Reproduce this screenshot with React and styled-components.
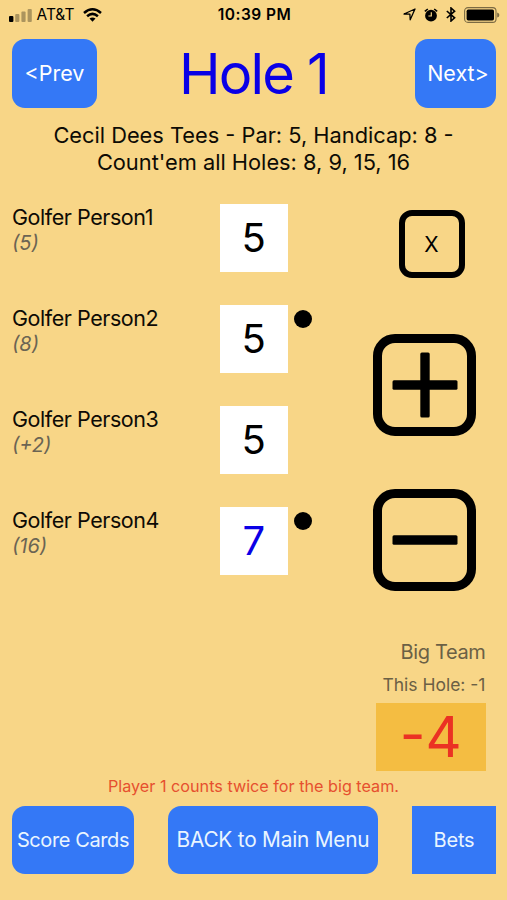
import React from 'react'
import styled, { createGlobalStyle } from 'styled-components';

const golfers = [
  { name: 'Golfer Person1', handicap: '(5)', score: 5 },
  { name: 'Golfer Person2', handicap: '(8)', score: 5, dot: true },
  { name: 'Golfer Person3', handicap: '(+2)', score: 5 },
  { name: 'Golfer Person4', handicap: '(16)', score: 7, dot: true, color: '#0a00e6' },
]

function App() {
  return (
    <>
      <GlobalStyle />
      <Container>
        <StatusBar>
          <StatusLeft>
            <svg width="23" height="14" viewBox="0 0 23 14">
              <rect x="0" y="8" width="4.4" height="6" rx="1" />
              <g opacity="0.3">
                <rect x="6.2" y="6" width="4.2" height="8" rx="1" />
                <rect x="12.4" y="3.5" width="4.2" height="10.5" rx="1" />
                <rect x="18.6" y="1" width="4.2" height="13" rx="1" />
              </g>
            </svg>
            <Carrier>AT&amp;T</Carrier>
            <svg width="19" height="14" viewBox="0 0 19 14" fill="none" stroke="#000" strokeWidth="2.5">
              <path d="M1 5 Q9.5 -2.4 18 5" />
              <path d="M4.1 8.3 Q9.5 3.4 14.9 8.3" />
              <path d="M9.5 13.8 L6.5 10.6 Q9.5 8.4 12.5 10.6 Z" fill="#000" stroke="none" />
            </svg>
          </StatusLeft>
          <Clock>10:39 PM</Clock>
          <StatusRight>
            <svg width="13" height="13" viewBox="0 0 13 13" fill="none" stroke="#000" strokeWidth="1.3" strokeLinejoin="round">
              <path d="M12 1 L7.2 11.8 L6.9 6.2 L1 6 Z" />
            </svg>
            <svg width="14" height="14" viewBox="0 0 14 14">
              <circle cx="7" cy="7.7" r="5.9" />
              <path d="M0.8 3.4 L3.8 1 M13.2 3.4 L10.2 1" stroke="#000" strokeWidth="1.5" />
              <path d="M7.3 4.2 V8 H4.4" fill="none" stroke="#f8d687" strokeWidth="1.2" />
            </svg>
            <svg width="10" height="15" viewBox="0 0 10 15" fill="none" stroke="#000" strokeWidth="1.6">
              <path d="M0.8 4 L8.6 10.8 L5 14 V1 L8.6 4.2 L0.8 11" />
            </svg>
            <svg width="36" height="16" viewBox="0 0 36 16">
              <rect x="0.6" y="0.6" width="31.4" height="14.8" rx="3.4" fill="none" stroke="#000" strokeOpacity="0.5" strokeWidth="1.1" />
              <rect x="2.6" y="2.6" width="27.4" height="10.8" rx="1.6" />
              <path d="M33.2 5.4 Q35.4 6 35.4 8 Q35.4 10 33.2 10.6 Z" opacity="0.5" />
            </svg>
          </StatusRight>
        </StatusBar>

        <Header>
          <NavButton $width={85}>&lt;Prev</NavButton>
          <Title>Hole 1</Title>
          <NavButton $width={81} $shift={5}>Next&gt;</NavButton>
        </Header>

        <Info>
          Cecil Dees Tees - Par: 5, Handicap: 8 -
          <br />
          Count'em all Holes: 8, 9, 15, 16
        </Info>

        <Main>
          <Golfers>
            {golfers.map(g => (
              <GolferRow key={g.name}>
                <GolferInfo>
                  <Name>{g.name}</Name>
                  <Handicap>{g.handicap}</Handicap>
                </GolferInfo>
                <Score $color={g.color}>{g.score}</Score>
                {g.dot && <Dot />}
              </GolferRow>
            ))}
          </Golfers>

          <Controls>
            <ClearButton>X</ClearButton>
            <StepButton>
              <svg width="66" height="66" viewBox="0 0 66 66">
                <rect x="0.5" y="28.3" width="65" height="9.4" rx="1.5" />
                <rect x="28.3" y="0.5" width="9.4" height="65" rx="1.5" />
              </svg>
            </StepButton>
            <StepButton>
              <svg width="66" height="66" viewBox="0 0 66 66">
                <rect x="0.5" y="28.3" width="65" height="9.4" rx="1.5" />
              </svg>
            </StepButton>
          </Controls>
        </Main>

        <Team>
          <TeamName>Big Team</TeamName>
          <TeamHole>This Hole: -1</TeamHole>
          <TeamScore>-4</TeamScore>
        </Team>

        <Message>Player 1 counts twice for the big team.</Message>

        <Footer>
          <FooterButton $width={122} $radius={13} $spacing={-0.4}>Score Cards</FooterButton>
          <FooterButton $width={210} $radius={13} $size={20.8}>BACK to Main Menu</FooterButton>
          <FooterButton $width={84}>Bets</FooterButton>
        </Footer>
      </Container>
    </>
  )
}

export default App;

const GlobalStyle = createGlobalStyle`
  * {
    box-sizing: border-box;
  }

  body {
    margin: 0;
    background: #f8d687;
  }

  svg {
    display: block;
    flex: none;
  }

  button {
    padding: 0;
    border: none;
    background: none;
    color: inherit;
    font: inherit;
    letter-spacing: inherit;
  }
`

const Container = styled.div`
  width: 507px;
  height: 900px;
  overflow: hidden;
  background: #f8d687;
  color: #0d0b05;
  font-family: Inter, "Liberation Sans", sans-serif;
  font-size: 21.5px;
`

const StatusBar = styled.div`
  display: grid;
  grid-template-columns: 1fr auto 1fr;
  align-items: center;
  height: 38.5px;
  padding: 0 7px 9px 9px;
  color: #000;
`

const StatusLeft = styled.div`
  display: flex;
  align-items: center;
`

const Carrier = styled.span`
  margin: 0 9px 0 4.5px;
  font-size: 15.5px;
`

const Clock = styled.div`
  font-size: 15.5px;
  font-weight: 600;
  letter-spacing: 0.45px;
`

const StatusRight = styled.div`
  display: flex;
  align-items: center;
  justify-content: flex-end;
  gap: 8px;
`

const Header = styled.div`
  display: flex;
  align-items: center;
  justify-content: space-between;
  height: 69.5px;
  padding: 0 11px 0 12px;
`

const NavButton = styled.button`
  width: ${p => p.$width}px;
  height: 69.5px;
  padding-left: ${p => p.$shift || 0}px;
  border-radius: 13px;
  background: #3478f6;
  color: #fff;
`

const Title = styled.div`
  padding: 2px 5px 0 0;
  color: #0a00e6;
  font-size: 56px;
  letter-spacing: -1.8px;
`

const Info = styled.div`
  margin-top: 14px;
  font-size: 21.8px;
  line-height: 27px;
  text-align: center;
`

const Main = styled.div`
  display: flex;
  justify-content: space-between;
  margin-top: 28px;
  padding: 0 31px 0 12px;
`

const Golfers = styled.div`
  display: flex;
  flex-direction: column;
  gap: 33.5px;
`

const GolferRow = styled.div`
  display: flex;
  height: 67.5px;
`

const GolferInfo = styled.div`
  width: 208px;
  line-height: 26px;
`

const Name = styled.div`
  letter-spacing: -0.45px;
`

const Handicap = styled.div`
  color: #6b6453;
  font-size: 20px;
  font-style: italic;
`

const Score = styled.div`
  display: flex;
  align-items: center;
  justify-content: center;
  width: 67.5px;
  height: 67.5px;
  background: #fff;
  color: ${p => p.$color || '#000'};
  font-size: 40px;
`

const Dot = styled.div`
  width: 18px;
  height: 18px;
  margin: 5px 0 0 6.5px;
  border-radius: 50%;
  background: #000;
`

const Controls = styled.div`
  display: flex;
  flex-direction: column;
  align-items: center;
  padding-top: 6px;
`

const ClearButton = styled.button`
  width: 66px;
  height: 68px;
  margin: 0 0 56px 14px;
  border: 6.5px solid #000;
  border-radius: 13px;
  color: #000;
  font-size: 21px;
`

const StepButton = styled.button`
  display: flex;
  align-items: center;
  justify-content: center;
  width: 103px;
  height: 102px;
  border: 9px solid #000;
  border-radius: 22px;

  & + & {
    margin: 53px 0 47px;
  }
`

const Team = styled.div`
  display: flex;
  flex-direction: column;
  align-items: flex-end;
  padding-right: 21.5px;
  color: #6b6045;
`

const TeamName = styled.div`
  font-size: 20px;
  letter-spacing: -0.35px;
  line-height: 28px;
`

const TeamHole = styled.div`
  margin-top: 8px;
  font-size: 17.5px;
  line-height: 22px;
`

const TeamScore = styled.div`
  display: flex;
  align-items: center;
  justify-content: center;
  width: 109.5px;
  height: 68px;
  margin-top: 6.5px;
  background: #f4bd42;
  color: #eb3223;
  font-size: 56px;
`

const Message = styled.div`
  margin-top: 4px;
  color: #e6502f;
  font-size: 16.2px;
  line-height: 22px;
  text-align: center;
`

const Footer = styled.div`
  display: flex;
  justify-content: space-between;
  margin-top: 9.5px;
  padding: 0 11px 0 12px;
`

const FooterButton = styled.button`
  width: ${p => p.$width}px;
  height: 67.5px;
  border-radius: ${p => p.$radius || 0}px;
  background: #3478f6;
  color: #e9f5ff;
  font-size: ${p => p.$size || 20}px;
  letter-spacing: ${p => p.$spacing || -0.2}px;
  white-space: nowrap;
`
